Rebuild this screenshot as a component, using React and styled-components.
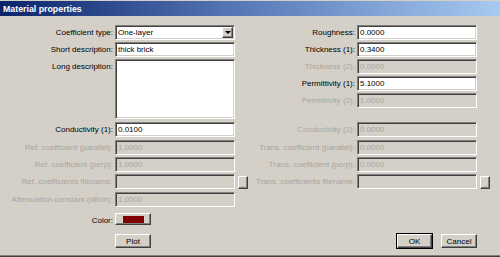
import React from 'react'
import styled, { createGlobalStyle } from 'styled-components'

const GlobalStyle = createGlobalStyle`
  html, body {
    margin: 0;
    padding: 0;
    background: #d4d0c8;
  }
  body {
    font-family: "Liberation Sans", Arial, sans-serif;
    font-size: 8px;
    color: #000;
  }
`

const Window = styled.div`
  width: 500px;
  height: 257px;
  box-sizing: border-box;
  background: #d4d0c8;
  padding-top: 1px;
  box-shadow: inset 0 -1px 0 #404040, inset 0 -2px 0 #808080;
`

const TitleBar = styled.div`
  height: 15px;
  display: flex;
  align-items: center;
  padding-left: 3px;
  background: linear-gradient(to right, #0a246a 0%, #5273b4 45%, #a6caf0 100%);
  color: #fff;
  font-weight: bold;
  font-size: 8.8px;
`

const Form = styled.div`
  display: grid;
  grid-template-columns: 113px 122px 13px 107px 122px 13px;
  grid-template-rows: 17px 17px 17px 17px 17px 12px 18px 17px 17px 18px 21px 21px 15px;
  margin-top: 9px;
`

const Label = styled.div`
  grid-row: ${p => p.$row};
  grid-column: ${p => p.$col};
  height: 15px;
  line-height: 15px;
  text-align: right;
  white-space: nowrap;
  color: ${p => (p.$disabled ? '#a8a59f' : '#000')};
`

const Field = styled.div`
  grid-row: ${p => p.$span || p.$row};
  grid-column: ${p => p.$col};
  margin-left: 2px;
  width: 120px;
  height: ${p => (p.$tall ? '60px' : '15px')};
  box-sizing: border-box;
  display: flex;
  align-items: ${p => (p.$tall ? 'flex-start' : 'center')};
  padding-left: 1px;
  border: 1px solid;
  border-color: #808080 #fff #fff #808080;
  box-shadow: inset 1px 1px 0 #404040, inset -1px -1px 0 #d4d0c8;
  background: ${p => (p.$disabled ? '#d4d0c8' : '#fff')};
  color: ${p => (p.$disabled ? '#a8a59f' : '#000')};
  white-space: nowrap;
`

const FieldText = styled.span`
  flex: 1;
  padding-left: 1px;
`

const DropButton = styled.div`
  width: 11px;
  height: 11px;
  box-sizing: border-box;
  margin-right: 1px;
  display: flex;
  align-items: center;
  justify-content: center;
  background: #d4d0c8;
  border: 1px solid;
  border-color: #fff #404040 #404040 #fff;
  box-shadow: inset -1px -1px 0 #808080;
`

const Arrow = styled.div`
  width: 0;
  height: 0;
  border-left: 3px solid transparent;
  border-right: 3px solid transparent;
  border-top: 3px solid #000;
`

const Browse = styled.div`
  grid-row: ${p => p.$row};
  grid-column: ${p => p.$col};
  margin: 2px 0 0 3px;
  width: 10px;
  height: 13px;
  box-sizing: border-box;
  background: #d4d0c8;
  border: 1px solid;
  border-color: #fff #404040 #404040 #fff;
  box-shadow: inset -1px -1px 0 #808080;
  font-size: 5px;
  line-height: 16px;
  text-align: center;
  color: #808080;
`

const Button = styled.div`
  width: ${p => p.$w || 36}px;
  height: ${p => p.$h || 14}px;
  box-sizing: border-box;
  display: flex;
  align-items: center;
  justify-content: center;
  background: #d4d0c8;
  border: 1px solid;
  border-color: #fff #404040 #404040 #fff;
  box-shadow: inset -1px -1px 0 #808080;
  outline: ${p => (p.$default ? '1px solid #000' : 'none')};
  outline-offset: 0;
`

const Cell = styled.div`
  grid-row: ${p => p.$row};
  grid-column: ${p => p.$col};
  margin-left: 2px;
  display: flex;
  justify-content: ${p => (p.$end ? 'flex-end' : 'flex-start')};
  align-items: flex-start;
  gap: 9px;
  width: 120px;
`

const Swatch = styled.div`
  width: 21px;
  height: 7px;
  background: #800000;
  margin-top: 1px;
`

const left = [
  { row: 1, label: 'Coefficient type:', value: 'One-layer', select: true },
  { row: 2, label: 'Short description:', value: 'thick brick' },
  { row: 3, label: 'Long description:', value: '', tall: true },
  { row: 7, label: 'Conductivity (1):', value: '0.0100' },
  { row: 8, label: 'Ref. coefficient (parallel):', value: '1.0000', disabled: true },
  { row: 9, label: 'Ref. coefficient (perp):', value: '1.0000', disabled: true },
  { row: 10, label: 'Ref. coefficients filename:', value: '', disabled: true, browse: true },
  { row: 11, label: 'Attenuation constant (dB/m):', value: '1.0000', disabled: true },
]

const right = [
  { row: 1, label: 'Roughness:', value: '0.0000' },
  { row: 2, label: 'Thickness (1):', value: '0.3400' },
  { row: 3, label: 'Thickness (2):', value: '0.0000', disabled: true },
  { row: 4, label: 'Permittivity (1):', value: '5.1000' },
  { row: 5, label: 'Permittivity (2):', value: '1.0000', disabled: true },
  { row: 7, label: 'Conductivity (2):', value: '0.0000', disabled: true },
  { row: 8, label: 'Trans. coefficient (parallel):', value: '0.0000', disabled: true },
  { row: 9, label: 'Trans. coefficient (perp):', value: '0.0000', disabled: true },
  { row: 10, label: 'Trans. coefficients filename:', value: '', disabled: true, browse: true },
]

function renderFields(items, col) {
  return items.map(f => (
    <React.Fragment key={col + '-' + f.row}>
      <Label $row={f.row} $col={col} $disabled={f.disabled}>{f.label}</Label>
      <Field
        $row={f.row}
        $span={f.tall ? `${f.row} / 7` : null}
        $col={col + 1}
        $tall={f.tall}
        $disabled={f.disabled}
      >
        <FieldText>{f.value}</FieldText>
        {f.select && <DropButton><Arrow /></DropButton>}
      </Field>
      {f.browse && <Browse $row={f.row} $col={col + 2}>...</Browse>}
    </React.Fragment>
  ))
}

export default function App() {
  return (
    <>
      <GlobalStyle />
      <Window>
        <TitleBar>Material properties</TitleBar>
        <Form>
          {renderFields(left, 1)}
          {renderFields(right, 4)}

          <Label $row={12} $col={1}>Color:</Label>
          <Cell $row={12} $col={2}>
            <Button $h={12}><Swatch /></Button>
          </Cell>

          <Cell $row={13} $col={2}>
            <Button>Plot</Button>
          </Cell>
          <Cell $row={13} $col={5} $end>
            <Button $w={35} $default>OK</Button>
            <Button>Cancel</Button>
          </Cell>
        </Form>
      </Window>
    </>
  )
}
